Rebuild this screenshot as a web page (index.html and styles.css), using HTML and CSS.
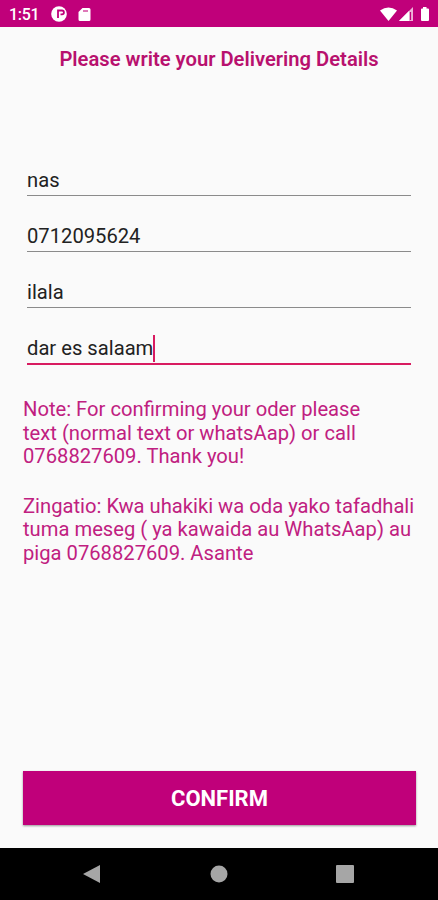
FILE: index.html
```html
<!DOCTYPE html>
<html lang="en">
<head>
    <meta charset="UTF-8">
    <meta name="viewport" content="width=device-width, initial-scale=1.0">
    <title>Delivering Details</title>
    <link rel="stylesheet" href="styles.css">
</head>
<body>
    <header class="status-bar">
        <span class="time">1:51</span>
        <svg class="app-icon" width="16" height="16" viewBox="0 0 16 16">
            <circle cx="8" cy="8" r="7.8" fill="#fff"/>
            <path d="M7 12V4.500h4a1.800 1.800 0 0 1 0 3.800H9.500" fill="none" stroke="#c0007a" stroke-width="1.800"/>
        </svg>
        <svg class="sd-icon" width="13" height="15" viewBox="0 0 13 15">
            <path d="M4.500 1H11a1.500 1.500 0 0 1 1.500 1.500v10A1.500 1.500 0 0 1 11 14H2a1.500 1.500 0 0 1-1.500-1.500V5z" fill="#fff"/>
            <path d="M5 4h5" stroke="#c0007a" stroke-width="1.500" stroke-opacity=".7"/>
        </svg>
        <svg class="signal" width="52" height="16" viewBox="0 0 52 16">
            <path d="M0 4.500Q8.500-1.500 17 4.500L8.500 15z" fill="#fff"/>
            <path d="M33 1v14H19z" fill="#fff" fill-opacity=".7"/>
            <path d="M29 5v10H19z" fill="#fff"/>
            <path d="M30.500 6v8" stroke="#c0007a" stroke-width="1.200"/>
            <path d="M41 3.500q0-1 1-1h1V1h3.500v1.500h1.500q1 0 1 1V14q0 1-1 1h-6q-1 0-1-1z" fill="#fff"/>
        </svg>
    </header>

    <main>
        <h1>Please write your Delivering Details</h1>

        <form class="details">
            <input type="text" class="field" value="nas" aria-label="Name">
            <input type="text" class="field" value="0712095624" aria-label="Phone">
            <input type="text" class="field" value="ilala" aria-label="Address">
            <div class="field active"><span>dar es salaam</span><i class="caret"></i></div>
        </form>

        <p class="note">Note: For confirming your oder please<br>text (normal text or whatsAap) or call<br>0768827609. Thank you!</p>
        <p class="note">Zingatio: Kwa uhakiki wa oda yako tafadhali<br>tuma meseg ( ya kawaida au WhatsAap) au<br>piga 0768827609. Asante</p>

        <button class="button">CONFIRM</button>
    </main>

    <footer class="nav-bar">
        <svg width="18" height="20" viewBox="0 0 18 20"><path d="M17 1v18L0 10z" fill="#a6a6a6"/></svg>
        <svg width="18" height="18" viewBox="0 0 18 18"><circle cx="9" cy="9" r="8.500" fill="#a6a6a6"/></svg>
        <svg width="18" height="18" viewBox="0 0 18 18"><rect width="18" height="18" rx="1" fill="#a6a6a6"/></svg>
    </footer>
</body>
</html>
```

FILE: styles.css
```css
* {
    box-sizing: border-box;
}
body {
    font-family: Roboto, sans-serif;
    margin: 0;
    height: 900px;
    display: flex;
    flex-direction: column;
    background-color: #fafafa;
}
.status-bar {
    height: 27px;
    background-color: #c0007a;
    color: white;
    display: flex;
    align-items: center;
    padding: 1px 6px 0 9px;
}
.time {
    font-size: 16px;
    font-weight: 500;
    letter-spacing: -0.3px;
    width: 42px;
}
.sd-icon {
    margin-left: 11px;
}
.signal {
    margin-left: auto;
}
main {
    flex: 1;
    display: flex;
    flex-direction: column;
    padding: 0 23px 23px;
}
h1 {
    margin: 20px 0 0;
    font-size: 20.2px;
    line-height: 24px;
    font-weight: 600;
    text-align: center;
    color: #b8116e;
}
.details {
    margin: 69px 4px 34px;
}
.field {
    display: flex;
    align-items: center;
    width: 100%;
    height: 56px;
    padding: 25px 0 0;
    border: 0;
    border-bottom: 1px solid #8b8b8b;
    background: none;
    font-family: inherit;
    font-size: 20.2px;
    color: #222;
    outline: none;
}
.active {
    height: 57px;
    border-bottom: 2px solid #d81b60;
}
.caret {
    width: 2px;
    height: 27px;
    background-color: #d81b60;
}
.note {
    margin: 0 0 26px;
    font-size: 20.2px;
    line-height: 23.5px;
    white-space: nowrap;
    color: #c02080;
}
.details + .note {
    margin-top: -1px;
}
.button {
    margin-top: auto;
    margin-right: -1px;
    height: 54px;
    background-color: #c0007a;
    color: white;
    border: none;
    box-shadow: 0 1px 2px rgba(0, 0, 0, 0.4);
    font-family: inherit;
    font-size: 22px;
    font-weight: 700;
}
.nav-bar {
    height: 52px;
    background-color: black;
    display: flex;
    align-items: center;
    justify-content: space-between;
    padding: 0 84px 0 83px;
}
```
